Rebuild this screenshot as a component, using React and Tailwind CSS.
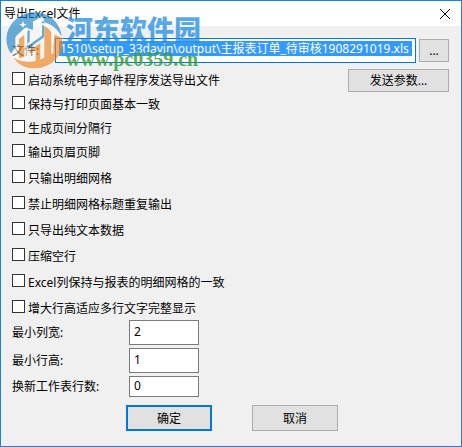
import { useState } from 'react';
import clsx from 'clsx';

const FILE_PATH = '1510\\setup_33dayin\\output\\主报表订单_待审核1908291019.xls';

const PAGE_OPTIONS = [
  { id: 'mail', label: '启动系统电子邮件程序发送导出文件' },
  { id: 'keepPage', label: '保持与打印页面基本一致' },
  { id: 'pageBreak', label: '生成页间分隔行' },
  { id: 'headerFooter', label: '输出页眉页脚' },
];

const GRID_OPTIONS = [
  { id: 'gridOnly', label: '只输出明细网格' },
  { id: 'noRepeat', label: '禁止明细网格标题重复输出' },
  { id: 'plainText', label: '只导出纯文本数据' },
  { id: 'compress', label: '压缩空行' },
  { id: 'keepColumns', label: 'Excel列保持与报表的明细网格的一致' },
  { id: 'growRows', label: '增大行高适应多行文字完整显示' },
];

const SIZES = [
  { id: 'colWidth', label: '最小列宽:', value: '2', height: 'h-[25px]' },
  { id: 'rowHeight', label: '最小行高:', value: '1', height: 'h-[25px]' },
  { id: 'sheetRows', label: '换新工作表行数:', value: '0', height: 'h-[21px]' },
];

function Option({ id, label }) {
  return (
    <div className="flex h-4 items-start gap-[3px]">
      <input
        id={id}
        type="checkbox"
        className="mt-px size-[13px] shrink-0 appearance-none border border-[#333333] bg-white checked:bg-[#0078d7]"
      />
      <label htmlFor={id} className="pt-0.5 leading-4 whitespace-nowrap">{label}</label>
    </div>
  );
}

function Button({ className, children }) {
  return (
    <button
      type="button"
      className={clsx('shrink-0 bg-[#e1e1e1] hover:bg-[#e5f1fb]', className)}
    >
      {children}
    </button>
  );
}

function Watermark() {
  return (
    <div className="pointer-events-none absolute top-2.5 left-1 flex select-none">
      <svg viewBox="0 0 174 174" className="size-[58px] opacity-65">
        <circle cx="87" cy="87" r="86" fill="#ffffff" opacity="0.6" />
        {/* blue crescent over the top, left side and right shoulder */}
        <path
          d="M18 128C2 108-2 72 16 44 36 12 74-2 108 6c36 8 60 38 62 72-12-24-30-38-52-44l-4-20-30 18v24L60 50 34 74v30l-16 24Z"
          fill="#1d84c8"
        />
        <path d="M64 62 74 56v40l32-18V34l12-4v48l-46 34-8-4Z" fill="#1d84c8" />
        {/* orange pillars and the lower crescent */}
        <path d="M42 84l16-12v66l-16 4Z" fill="#f0851c" />
        <path d="M74 118l32-22v66l-14 2v-48l-18 12Z" fill="#f0851c" />
        <path d="M118 44c12 4 20 10 24 16v62l-24 26Z" fill="#f0851c" />
        <path
          d="M172 84c8 46-32 88-84 88-28 0-50-12-62-32 28 18 74 16 98-6 12-10 20-26 22-42l2-20c10 2 18 6 24 12Z"
          fill="#f0851c"
        />
        {/* white outline of the H */}
        <path
          d="M34 128V80l30-26v50l44-32V34M142 128V62c-8-12-22-22-34-24M64 148v-40"
          fill="none"
          stroke="#ffffff"
          strokeWidth="6"
        />
        <path d="m54 30 3 8 8 3-8 3-3 8-3-8-8-3 8-3Z" fill="#ffffff" />
      </svg>
      <div className="pl-[3px] whitespace-nowrap">
        <p className="pt-1 font-['Noto_Sans_CJK_SC',sans-serif] text-[27px] leading-7 font-black text-[#1f8de0]/75">
          河东软件园
        </p>
        <p className="pt-0.5 font-['Liberation_Serif',serif] text-[20px] leading-7 font-bold text-[#38a138]/85">
          www.pc0359.cn
        </p>
      </div>
    </div>
  );
}

export default function App() {
  const [path, setPath] = useState(FILE_PATH);

  return (
    <div className="relative flex min-h-screen flex-col border border-[#1883d7] bg-[#f0f0f0] font-['Noto_Sans','Noto_Sans_CJK_SC',sans-serif] text-[12px] leading-4 text-black">
      <header className="flex h-[25px] items-center justify-between bg-white pr-2 pl-[3px]">
        <h1>导出Excel文件</h1>
        <button type="button" aria-label="关闭" className="flex size-4 items-center justify-center">
          <svg viewBox="0 0 12 12" className="size-3" fill="none" stroke="#000000">
            <path d="M1 1l10 10M11 1L1 11" />
          </svg>
        </button>
      </header>

      <main className="flex flex-col pt-3 pr-3 pl-[11px]">
        <div className="flex items-center gap-[3px]">
          <label htmlFor="path" className="w-10 shrink-0">文件:</label>
          <div className="flex h-[25px] min-w-0 flex-1 items-start border border-[#0078d7] bg-white px-[3px] pt-0.5">
            <input
              id="path"
              value={path}
              onChange={(e) => setPath(e.target.value)}
              className="h-[15px] w-full min-w-0 bg-[#3399ff] pl-px text-white outline-none"
            />
          </div>
          <Button className="h-[23px] w-[30px] border border-[#adadad]">...</Button>
        </div>

        <div className="flex items-start justify-between pt-1.5">
          <div className="flex flex-col gap-2 pt-0.5">
            {PAGE_OPTIONS.map((o) => <Option key={o.id} {...o} />)}
          </div>
          <Button className="h-[23px] w-[101px] border border-[#adadad]">发送参数...</Button>
        </div>

        <div className="flex flex-col gap-2.5 pt-2.5">
          {GRID_OPTIONS.map((o) => <Option key={o.id} {...o} />)}
        </div>

        <div className="flex flex-col gap-[3px] pt-[5px]">
          {SIZES.map((s) => (
            <div key={s.id} className="flex items-center">
              <label htmlFor={s.id} className="w-[117px]">{s.label}</label>
              <input
                id={s.id}
                defaultValue={s.value}
                className={clsx('w-[70px] border border-[#7a7a7a] bg-white px-1 pb-0.5 outline-none', s.height)}
              />
            </div>
          ))}
        </div>

        <div className="flex gap-10 pt-2 pl-[114px]">
          <Button className="h-[26px] w-[86px] border-2 border-[#0078d7] pt-0.5">确定</Button>
          <Button className="h-[26px] w-[86px] border border-[#adadad] pt-0.5">取消</Button>
        </div>
      </main>

      <Watermark />
    </div>
  );
}
